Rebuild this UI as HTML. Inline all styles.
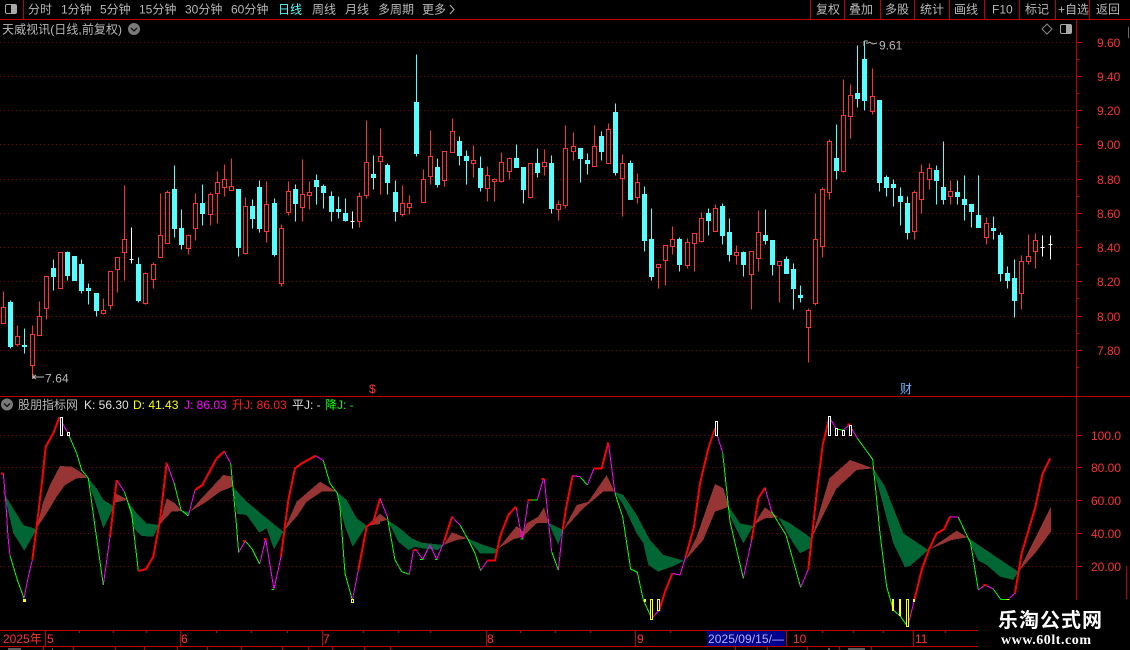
<!DOCTYPE html>
<html><head><meta charset="utf-8"><style>
html,body{margin:0;padding:0;background:#000;width:1130px;height:650px;overflow:hidden}
svg{display:block;position:absolute;left:0;top:0}
text{font-family:"Liberation Sans","WenQuanYi Zen Hei","Noto Sans CJK SC",sans-serif;font-size:12px}
.t{fill:#b8b8b8}.l{fill:#ff3232}
</style></head><body>
<svg width="1130" height="650" viewBox="0 0 1130 650" xmlns="http://www.w3.org/2000/svg">
<rect width="1130" height="650" fill="#000"/>
<g shape-rendering="crispEdges">
<!-- grid -->
<path d="M0 42.5H1076M0 76.5H1076M0 110.5H1076M0 144.5H1076M0 179.5H1076M0 213.5H1076M0 247.5H1076M0 281.5H1076M0 316.5H1076M0 350.5H1076M0 435.5H1076M0 467.5H1076M0 500.5H1076M0 533.5H1076M0 566.5H1076" stroke="#780000" stroke-dasharray="1 3" fill="none"/>
<!-- frame -->
<path d="M0 19.5H1130M0 396.5H1130M0 630.5H978M0 646.5H978M23.5 0V19M810.5 0V19M844.5 0V19M880.5 0V19M914.5 0V19M949.5 0V19M984.5 0V19M1019.5 0V19M1055.5 0V19M1089.5 0V19M1076.5 19V600M1126.5 566V599M45.5 631V646M180.5 631V646M322.5 631V646M486.5 631V646M635.5 631V646M786.5 631V646M913.5 631V646M79.5 631V633M113.5 631V633M146.5 631V633M216.5 631V633M251.5 631V633M287.5 631V633M363.5 631V633M398.5 631V633M430.5 631V633M520.5 631V633M555.5 631V633M590.5 631V633M670.5 631V633M822.5 631V633M853.5 631V633M883.5 631V633M945.5 631V633M43.5 647V650M73.5 647V650M115.5 647V650M144.5 647V650M177.5 647V650M207.5 647V650M241.5 647V650M282.5 647V650M308.5 647V650M332.5 647V650M364.5 647V650M390.5 647V650M735.5 647V650M767.5 647V650M807.5 647V650M839.5 647V650M871.5 647V650" stroke="#c00000" fill="none"/>
<path d="M1076 42.5h6M1076 76.5h6M1076 110.5h6M1076 144.5h6M1076 179.5h6M1076 213.5h6M1076 247.5h6M1076 281.5h6M1076 316.5h6M1076 350.5h6M1076 59.5h3M1076 93.5h3M1076 127.5h3M1076 161.5h3M1076 196.5h3M1076 230.5h3M1076 264.5h3M1076 298.5h3M1076 333.5h3M1076 367.5h3M1076 435.5h6M1076 467.5h6M1076 500.5h6M1076 533.5h6M1076 566.5h6" stroke="#c00000" fill="none"/>
<path d="M1128.5 27V38" stroke="#6a6a6a" fill="none"/>
<!-- candles -->
<g transform="translate(.5 .5)" stroke-width="1">
<path fill="none" stroke="#ff3232" d="M3 291V307M1 307h4v16h-4zM17 325V336M17 344V346M15 336h4v8h-4zM32 325V334M32 365V378M30 334h4v31h-4zM39 301V316M37 316h4v19h-4zM46 308V319M44 276h4v32h-4zM58 252h4v36h-4zM103 298V310M103 313V314M101 310h4v3h-4zM110 305V309M108 271h4v34h-4zM117 269V292M115 257h4v12h-4zM124 185V239M124 252V280M122 239h4v13h-4zM145 272V273M145 303V304M143 273h4v30h-4zM153 262V264M153 279V288M151 264h4v15h-4zM160 193V235M158 235h4v22h-4zM167 190V192M165 192h4v51h-4zM188 234V235M188 248V254M186 235h4v13h-4zM195 193V203M195 228V240M193 203h4v25h-4zM210 192V194M210 214V225M208 194h4v20h-4zM217 171V182M217 193V223M215 182h4v11h-4zM224 164V179M224 187V196M222 179h4v8h-4zM231 158V186M229 186h4v4h-4zM245 197V206M245 253V254M243 206h4v47h-4zM266 181V204M266 231V242M264 204h4v27h-4zM281 224V228M281 283V286M279 228h4v55h-4zM288 181V191M288 212V215M286 191h4v21h-4zM302 159V194M302 207V221M300 194h4v13h-4zM309 181V192M309 195V209M307 192h4v3h-4zM359 192V196M359 221V227M357 196h4v25h-4zM366 120V162M366 195V198M364 162h4v33h-4zM380 128V156M380 161V194M378 156h4v5h-4zM402 185V203M402 214V216M400 203h4v11h-4zM409 195V203M409 207V214M407 203h4v4h-4zM423 169V179M421 179h4v23h-4zM430 130V156M430 176V184M428 156h4v20h-4zM444 180V186M442 151h4v29h-4zM452 118V131M450 131h4v21h-4zM473 145V160M473 163V177M471 160h4v3h-4zM487 166V175M487 188V201M485 175h4v13h-4zM494 178V179M494 181V201M492 179h4v2h-4zM501 152V162M501 181V182M499 162h4v19h-4zM509 157V158M509 171V179M507 158h4v13h-4zM530 197V198M528 163h4v34h-4zM544 149V162M544 166V175M542 162h4v4h-4zM558 200V204M558 209V220M556 204h4v5h-4zM565 125V148M565 205V208M563 148h4v57h-4zM573 132V146M573 151V160M571 146h4v5h-4zM594 125V146M592 146h4v20h-4zM608 123V129M606 129h4v34h-4zM622 154V163M622 178V216M620 163h4v15h-4zM637 173V182M637 197V203M635 182h4v15h-4zM658 267V288M656 264h4v3h-4zM665 260V285M663 245h4v15h-4zM672 226V239M672 246V254M670 239h4v7h-4zM687 238V242M687 265V268M685 242h4v23h-4zM694 243V271M692 233h4v10h-4zM701 212V218M701 241V242M699 218h4v23h-4zM715 204V208M713 208h4v23h-4zM736 245V252M736 255V264M734 252h4v3h-4zM751 274V309M749 251h4v23h-4zM758 210V232M758 258V271M756 232h4v26h-4zM779 265V302M777 261h4v4h-4zM808 308V310M808 327V362M806 310h4v17h-4zM815 193V239M815 303V305M813 239h4v64h-4zM822 187V189M822 246V257M820 189h4v57h-4zM829 139V141M829 192V199M827 141h4v51h-4zM843 79V115M843 171V172M841 115h4v56h-4zM850 84V95M850 116V138M848 95h4v21h-4zM872 68V96M872 111V114M870 96h4v15h-4zM914 190V192M914 231V239M912 192h4v39h-4zM921 164V172M921 199V213M919 172h4v27h-4zM929 163V168M929 179V189M927 168h4v11h-4zM950 180V191M950 196V204M948 191h4v5h-4zM986 217V223M986 237V244M984 223h4v14h-4zM1021 255V261M1021 293V309M1019 261h4v32h-4zM1028 234V256M1028 261V264M1026 256h4v5h-4zM1035 233V240M1035 251V268M1033 240h4v11h-4z"/>
<path fill="#54ffff" stroke="#54ffff" d="M10 300V348M8 302h4v44h-4zM24 328V353M22 345h4v1h-4zM53 259V290M51 268h4v8h-4zM67 251V280M65 252h4v23h-4zM72 256h4v24h-4zM81 259V293M79 264h4v26h-4zM88 283V304M86 288h4v2h-4zM96 293V316M94 293h4v17h-4zM138 257V302M136 264h4v36h-4zM174 165V237M172 189h4v39h-4zM181 209V249M179 228h4v16h-4zM202 184V225M200 203h4v10h-4zM238 189V256M236 189h4v58h-4zM252 199V228M250 206h4v12h-4zM259 180V232M257 187h4v41h-4zM274 198V256M272 203h4v51h-4zM295 184V221M293 189h4v14h-4zM316 174V204M314 180h4v6h-4zM323 184V208M321 186h4v6h-4zM331 191V221M329 196h4v15h-4zM338 196V218M336 209h4v2h-4zM345 198V221M343 213h4v7h-4zM373 155V189M371 174h4v3h-4zM387 163V194M385 165h4v17h-4zM395 180V221M393 192h4v19h-4zM416 54V156M414 102h4v51h-4zM437 158V187M435 167h4v17h-4zM459 136V165M457 141h4v14h-4zM466 150V184M464 156h4v4h-4zM480 156V191M478 168h4v19h-4zM516 144V167M514 158h4v9h-4zM523 167V203M521 167h4v22h-4zM537 148V177M535 163h4v9h-4zM551 155V213M549 163h4v45h-4zM580 148V182M578 148h4v10h-4zM587 153V174M585 160h4v3h-4zM601 131V160M599 136h4v15h-4zM615 103V175M613 112h4v60h-4zM630 160V199M628 163h4v36h-4zM644 186V251M642 194h4v46h-4zM651 208V280M649 239h4v37h-4zM679 237V271M677 239h4v25h-4zM708 208V235M706 213h4v7h-4zM722 203V244M720 206h4v29h-4zM729 218V261M727 232h4v22h-4zM743 251V276M741 252h4v12h-4zM765 209V244M763 235h4v5h-4zM772 240V275M770 240h4v24h-4zM786 256V273M784 259h4v14h-4zM793 263V309M791 269h4v19h-4zM800 285V302M798 295h4v2h-4zM836 124V179M834 158h4v12h-4zM857 45V107M855 93h4v5h-4zM864 40V110M862 59h4v41h-4zM879 100V191M877 100h4v82h-4zM886 175V196M884 177h4v10h-4zM893 179V206M891 184h4v3h-4zM900 187V225M898 196h4v5h-4zM907 196V239M905 203h4v29h-4zM936 165V204M934 170h4v10h-4zM943 141V204M941 187h4v12h-4zM957 180V204M955 192h4v4h-4zM964 175V220M962 199h4v5h-4zM971 204V227M969 204h4v7h-4zM978 175V227M976 215h4v12h-4zM993 216V239M991 228h4v2h-4zM1000 232V281M998 235h4v38h-4zM1007 266V288M1005 273h4v7h-4zM1014 259V317M1012 278h4v22h-4z"/>
<path fill="none" stroke="#fff" d="M131 227V263M129 259h4M352 211V228M350 221h4M1042 235V256M1040 247h4M1050 235V259M1048 244h4"/>
</g>
<!-- lower panel, coords in 3x zoom space -->
<g fill="#973434">
<g transform="translate(0 410) scale(.33333)">
<polygon points="10,235 14,250 10,250"/>
<polygon points="108,358 130,275 150,225 180,168 215,170 240,185 262,203 230,205 195,225 170,260 140,310"/>
<polygon points="340,290 345,250 375,265 380,270 345,278"/>
<polygon points="478,345 500,265 525,280 545,303 515,305"/>
<polygon points="570,305 600,270 670,195 698,200 698,230 660,245 620,275"/>
<polygon points="852,362 890,275 960,215 1010,245 965,245 920,275 890,320"/>
<polygon points="1100,347 1140,312 1140,342"/>
</g>
<g transform="translate(380 410) scale(.33333)">
<polygon points="0,310 22,330 0,335"/>
<polygon points="190,405 216,367 262,385 230,390"/>
<polygon points="355,415 410,348 430,365 440,340 475,320 492,292 505,338 470,340 430,380 400,388"/>
<polygon points="550,360 590,285 625,275 680,195 703,245 670,245 610,295"/>
<polygon points="915,452 950,380 1005,222 1030,235 1047,290 1005,305 970,390"/>
</g>
<g transform="translate(730 410) scale(.33333)">
<polygon points="70,345 105,292 145,322 105,325"/>
<polygon points="245,385 298,205 360,150 430,175 380,180 320,235"/>
<polygon points="595,420 680,362 712,382 665,390"/>
<polygon points="865,485 963,290 963,365 915,430"/>
</g>
</g>
<g fill="#006633">
<g transform="translate(0 410) scale(.33333)">
<polygon points="12,250 70,345 110,358 73,422 40,370"/>
<polygon points="262,203 290,235 310,270 335,285 340,295 310,355 290,290"/>
<polygon points="380,270 410,310 440,340 478,345 460,380 425,378 405,360"/>
<polygon points="545,303 568,305 565,318"/>
<polygon points="698,230 740,275 800,325 850,365 822,418 800,355 778,368 740,315 712,312"/>
<polygon points="1010,245 1040,270 1070,325 1100,347 1058,410 1035,350 1020,290"/>
</g>
<g transform="translate(380 410) scale(.33333)">
<polygon points="22,330 60,355 95,385 125,398 190,405 175,420 125,415 105,410 85,420 55,395"/>
<polygon points="262,385 310,405 352,418 345,430 300,430"/>
<polygon points="505,338 550,360 535,405"/>
<polygon points="703,245 730,255 770,315 810,390 850,435 912,452 880,468 835,485 805,465 790,400 770,370 730,285"/>
</g>
<g transform="translate(730 410) scale(.33333)">
<polygon points="-3,290 30,340 70,348 40,400 0,318"/>
<polygon points="145,322 180,340 245,385 240,415 210,430 190,400"/>
<polygon points="430,175 465,230 520,370 595,420 540,468 525,472 490,400"/>
<polygon points="712,382 790,435 865,485 850,510 810,500 770,465 745,452"/>
</g>
</g>
<!-- J curve -->
<g fill="none" stroke-linejoin="round">
<g transform="translate(0 410) scale(.33333)">
<g stroke="#ff00ff" stroke-width="3"><path d="M10 191L17 270 24 380 30 437M72 565L85 500 97 450M178 22L205 72M310 525L330 380M350 210L373 245M500 158L522 218M565 318L585 240M673 124L692 160M716 427L736 393M779 462L797 387 822 538 843 440M947 137L970 152M1057 570L1075 480"/></g>
<g stroke="#00ff00" stroke-width="3"><path d="M30 437L52 510 72 565M205 72L230 130 245 180 265 205 285 350 310 525M373 245L395 310 415 483M522 218L543 300 565 318M692 160L708 330 716 427M736 393L757 418 779 462M815 538H822M970 152L990 220 1012 250 1020 290 1035 490 1057 570"/></g>
<g stroke="#ff0000" stroke-width="6"><path d="M3 191H10M97 450L110 350 125 225 137 110 160 70 178 22M330 380L350 210M415 483L437 478 460 440 480 330 500 158M585 240L607 225 650 145 673 124M729 393H737M792 387H800M843 440L865 270 885 175 905 160 947 137M1075 480L1100 350 1120 335 1140 265"/></g>
</g>
<g transform="translate(380 410) scale(.33333)">
<g stroke="#ff00ff" stroke-width="3"><path d="M0 265L22 320M88 493L100 422 110 422 128 448 150 405 170 448 192 395M216 320L240 345M302 482L322 452M408 290L425 380 428 385 445 270M472 270L490 207 493 207 505 330 515 425M535 480L548 360M578 197L600 200M622 225L642 175M685 97L705 250M815 625L838 600M877 490L900 495 917 440M1005 55L1028 128"/></g>
<g stroke="#00ff00" stroke-width="3"><path d="M22 320L45 450 65 485 88 493M120 448H130M165 448H173M240 345L265 390 285 430 302 482M421 387H431M450 270H472M515 425L535 480M600 200L622 225M705 250L728 320 752 477 772 487 790 570 815 625M1028 128L1050 335"/></g>
<g stroke="#ff0000" stroke-width="6"><path d="M100 420H110M192 395L216 320M322 452H345L360 380 385 315 408 290M443 270H452M485 207H494M548 360L558 295 578 197M642 175H665L685 97M838 600L855 545 877 490M917 440L942 350 960 220 985 115 1005 55"/></g>
</g>
<g transform="translate(730 410) scale(.33333)">
<g stroke="#ff00ff" stroke-width="3"><path d="M40 505L65 390M105 233L125 305M212 532L235 478M298 22L318 55M340 60L358 45 382 85M533 650L553 570M660 320L685 322M745 540L765 525 790 537M838 565L855 550"/></g>
<g stroke="#00ff00" stroke-width="3"><path d="M0 335L40 505M125 305L168 375 212 532M318 58L340 60M382 85L428 148 450 370 470 530 490 600 512 620 533 650M685 322L722 400 745 540M790 537L812 568 830 568"/></g>
<path d="M830 568H838" stroke="#ffff00" stroke-width="3"/>
<g stroke="#ff0000" stroke-width="6"><path d="M65 390L85 265 105 233M235 478L260 250 278 105 298 22M353 44H362M553 570L575 480 597 418 620 370 642 358 660 320M761 525H769M855 550L875 430 915 295 938 190 961 145"/></g>
</g>
</g>
<!-- markers -->
<g fill="#000">
<g stroke="#fff"><rect x="60.5" y="417.5" width="2" height="18"/><rect x="67.5" y="432.5" width="2" height="3"/><rect x="715.5" y="421.5" width="2" height="14"/><rect x="828.5" y="416.5" width="2" height="19"/><rect x="835.5" y="428.5" width="2" height="7"/><rect x="842.5" y="430.5" width="2" height="5"/><rect x="849.5" y="425.5" width="2" height="10"/></g>
<g stroke="#ffff00"><rect x="351.5" y="599.5" width="2" height="3"/><rect x="644.5" y="599.5" width="1" height="2"/><rect x="650.5" y="599.5" width="2" height="20"/><rect x="657.5" y="599.5" width="2" height="11"/><rect x="892.5" y="599.5" width="1" height="11"/><rect x="899.5" y="599.5" width="1" height="16"/><rect x="906.5" y="599.5" width="2" height="27"/><rect x="913.5" y="599.5" width="1" height="2"/></g>
</g>
<rect x="23" y="599" width="3" height="3" fill="#ffff00"/>
<!-- watermark backing -->
<rect x="978" y="600" width="152" height="50" fill="#000"/>
<rect x="707" y="631" width="78" height="15" fill="#00008c"/>
<path d="M8 649h13M52 649h1M828 649h2M848 649h17" stroke="#b8b8b8"/>
</g>
<!-- toolbar -->
<g class="t">
<text x="28" y="13.5">分时</text>
<text x="61" y="13.5">1分钟</text>
<text x="100" y="13.5">5分钟</text>
<text x="139" y="13.5">15分钟</text>
<text x="185" y="13.5">30分钟</text>
<text x="231" y="13.5">60分钟</text>
<text x="278" y="13.5" style="fill:#54ffff">日线</text>
<text x="312" y="13.5">周线</text>
<text x="345" y="13.5">月线</text>
<text x="378" y="13.5">多周期</text>
<text x="422" y="13.5">更多</text>
<text x="816" y="13.5">复权</text>
<text x="849" y="13.5">叠加</text>
<text x="885" y="13.5">多股</text>
<text x="920" y="13.5">统计</text>
<text x="954" y="13.5">画线</text>
<text x="992" y="13.5">F10</text>
<text x="1025" y="13.5">标记</text>
<text x="1058" y="13.5">+自选</text>
<text x="1096" y="13.5">返回</text>
<text x="2" y="33.5" textLength="120" lengthAdjust="spacing">天威视讯(日线,前复权)</text>
<text x="45" y="382.5" style="letter-spacing:.1px">7.64</text>
<text x="879" y="49.5">9.61</text>
</g>
<path d="M450 5l4 4.5-4 4.5" stroke="#b8b8b8" fill="none"/>
<!-- icons -->
<g fill="none">
<rect x="5.5" y="4.5" width="11" height="9" rx="1.5" stroke="#a8a8a8"/><rect x="11" y="5" width="5" height="8" fill="#a8a8a8"/>
<rect x="1060.5" y="24.5" width="11" height="9" rx="1.5" stroke="#a8a8a8"/><rect x="1066" y="25" width="5" height="8" fill="#a8a8a8"/>
<path d="M1047 24l5 5-5 5-5-5z" stroke="#8a8a8a"/>
<circle cx="134" cy="29" r="6" fill="#7a7a7a"/><path d="M131 28l3 3 3-3" stroke="#111" stroke-width="1.3"/>
<circle cx="7" cy="404.5" r="6" fill="#7a7a7a"/><path d="M4 403.5l3 3 3-3" stroke="#111" stroke-width="1.3"/>
<path d="M33 377h11M33 377l3-2M33 377l3 2M33 374v5" stroke="#b8b8b8"/>
<path d="M864 41h4M864 41v5M866 43h3M869 42l4 2 4-1" stroke="#b8b8b8"/>
</g>
<!-- axis labels -->
<g class="l">
<text x="1097" y="47">9.60</text><text x="1097" y="81">9.40</text><text x="1097" y="115">9.20</text><text x="1097" y="149">9.00</text><text x="1097" y="184">8.80</text><text x="1097" y="218">8.60</text><text x="1097" y="252">8.40</text><text x="1097" y="286">8.20</text><text x="1097" y="321">8.00</text><text x="1097" y="355">7.80</text>
<text x="1091" y="440">100.0</text><text x="1091" y="472">80.00</text><text x="1091" y="505">60.00</text><text x="1091" y="538">40.00</text><text x="1091" y="571">20.00</text>
<text x="3" y="643">2025年</text><text x="47" y="643">5</text><text x="181" y="643">6</text><text x="323" y="643">7</text><text x="487" y="643">8</text><text x="637" y="643">9</text><text x="793" y="643">10</text><text x="915" y="643">11</text>
<text x="369" y="393">$</text>
</g>
<text x="900" y="393" style="fill:#6ab4ff">财</text>
<text x="708" y="643" textLength="76" lengthAdjust="spacing" style="fill:#b4b4ff">2025/09/15/—</text>
<!-- indicator header -->
<text x="18" y="409" fill="#b8b8b8">股朋指标网</text>
<text x="84" y="409" fill="#e0e0e0">K: 56.30</text>
<text x="133" y="409" fill="#ffff00">D: 41.43</text>
<text x="184" y="409" fill="#ff00ff">J: 86.03</text>
<text x="232" y="409" fill="#ff2020">升J: 86.03</text>
<text x="292" y="409" fill="#e0e0e0">平J: -</text>
<text x="325" y="409" fill="#00ff00">降J: -</text>
<!-- watermark -->
<text x="998" y="627" textLength="104" lengthAdjust="spacing" style="font-family:'Noto Sans CJK SC',sans-serif;font-size:20px;font-weight:700" fill="#fff">乐淘公式网</text>
<text x="1001" y="644" textLength="90" lengthAdjust="spacing" style="font-family:'Liberation Serif',serif;font-size:14px;font-weight:700" fill="#fff">www.60lt.com</text>
</svg>
</body></html>
